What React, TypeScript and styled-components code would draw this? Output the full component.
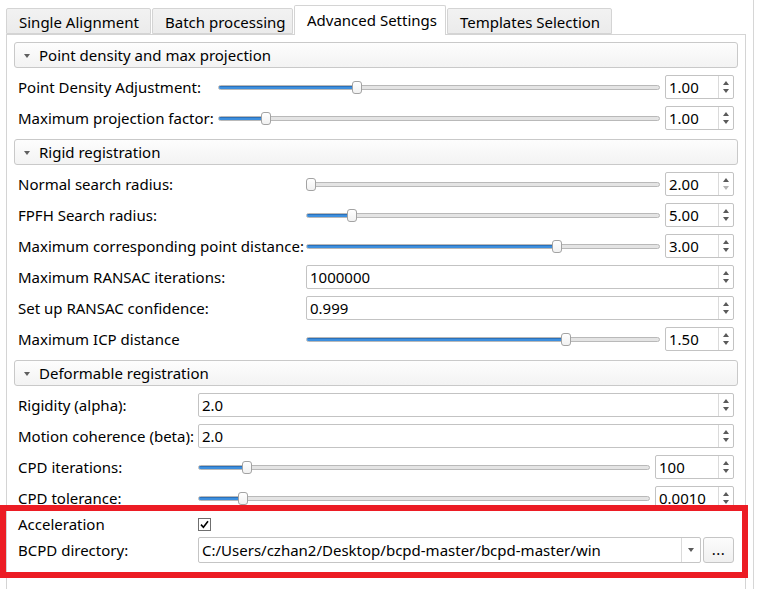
import React from "react";
import styled, { createGlobalStyle } from "styled-components";

const GlobalStyle = createGlobalStyle`
  html, body {
    margin: 0;
    padding: 0;
    background: #fff;
  }
  body {
    font-family: "Noto Sans", "Liberation Sans", sans-serif;
    font-size: 15px;
    color: #000;
  }
`;

const Window = styled.div`
  position: relative;
  width: 759px;
  height: 589px;
  overflow: hidden;
  background: #fff;
`;

const Frame = styled.div`
  width: 754px;
  height: 100%;
  border-right: 1px solid #d6d6d6;
  box-sizing: border-box;
`;

const TabBar = styled.div`
  display: flex;
  align-items: flex-end;
  height: 34px;
  padding-left: 6px;
  box-sizing: border-box;
`;

const Tab = styled.div<{ $active?: boolean; $width: number }>`
  position: relative;
  z-index: ${(p) => (p.$active ? 1 : 0)};
  box-sizing: border-box;
  width: ${(p) => p.$width}px;
  height: ${(p) => (p.$active ? 30 : 26)}px;
  margin-bottom: ${(p) => (p.$active ? -1 : 0)}px;
  margin-right: 1px;
  padding: ${(p) => (p.$active ? "0 0 2px 12px" : "1px 0 0 12px")};
  display: flex;
  align-items: center;
  border: 1px solid #d4d4d4;
  border-bottom: ${(p) => (p.$active ? "none" : "1px solid #d4d4d4")};
  border-radius: 2px 2px 0 0;
  background: ${(p) => (p.$active ? "#fff" : "linear-gradient(#f2f2f2, #ebebeb)")};
  white-space: nowrap;
`;

const Pane = styled.div`
  margin-left: 6px;
  width: 740px;
  height: 560px;
  border: 1px solid #d4d4d4;
  border-bottom: none;
  box-sizing: border-box;
  padding: 7px 7px 0;
`;

const Section = styled.div`
  margin-bottom: 6px;
`;

const SectionHeader = styled.div`
  height: 26px;
  box-sizing: border-box;
  border: 1px solid #c9c9c9;
  border-radius: 3px;
  background: linear-gradient(#fdfdfd, #f3f3f3);
  display: flex;
  align-items: center;
  gap: 9px;
  padding-left: 9px;
  margin-bottom: 3px;
`;

const Caret = styled.span`
  width: 0;
  height: 0;
  border-left: 3.5px solid transparent;
  border-right: 3.5px solid transparent;
  border-top: 4px solid #5f5f5f;
  margin-top: 1px;
`;

const Row = styled.div<{ $labelWidth: number; $height?: number }>`
  display: grid;
  grid-template-columns: ${(p) => p.$labelWidth}px 1fr;
  align-items: center;
  height: ${(p) => p.$height ?? 31}px;
  padding: 0 4px;
`;

const Label = styled.span`
  white-space: nowrap;
`;

const Control = styled.div`
  display: flex;
  align-items: center;
  gap: 5px;
  min-width: 0;
`;

const SliderTrack = styled.div`
  position: relative;
  flex: 1;
  height: 24px;
`;

const Groove = styled.div`
  position: absolute;
  left: 0;
  right: 0;
  top: 10px;
  height: 5px;
  box-sizing: border-box;
  border: 1px solid #b9b9b9;
  border-radius: 3px;
  background: #e4e4e4;
  overflow: hidden;
`;

const GrooveFill = styled.div`
  height: 100%;
  background: #3d8fde;
  box-shadow: inset 0 1px 0 #2b70b8;
`;

const Handle = styled.div`
  position: absolute;
  top: 6px;
  width: 10px;
  height: 13px;
  box-sizing: border-box;
  border: 1px solid #a3a3a3;
  border-radius: 3px;
  background: linear-gradient(#ffffff, #f1f1f1);
`;

const SpinBox = styled.div<{ $width?: number }>`
  display: flex;
  box-sizing: border-box;
  width: ${(p) => (p.$width ? `${p.$width}px` : "100%")};
  flex: ${(p) => (p.$width ? "none" : "1")};
  height: 24px;
  border: 1px solid #c3c3c3;
  border-radius: 2px;
  background: #fff;
`;

const SpinText = styled.div`
  flex: 1;
  display: flex;
  align-items: center;
  padding-left: 3px;
  white-space: nowrap;
  overflow: hidden;
`;

const SpinButtons = styled.div`
  width: 14px;
  border-left: 1px solid #dadada;
  display: flex;
  flex-direction: column;
  align-items: center;
  justify-content: center;
  gap: 4px;
`;

const Arrow = styled.span<{ $down?: boolean; $disabled?: boolean }>`
  width: 0;
  height: 0;
  border-left: 3.5px solid transparent;
  border-right: 3.5px solid transparent;
  ${(p) =>
    p.$down
      ? `border-top: 4px solid ${p.$disabled ? "#b3b3b3" : "#5a5a5a"};`
      : `border-bottom: 4px solid ${p.$disabled ? "#b3b3b3" : "#5a5a5a"};`}
`;

const CheckBox = styled.div`
  width: 13px;
  height: 13px;
  box-sizing: border-box;
  border: 1px solid #6f6f6f;
  background: #fff;
  display: flex;
  align-items: center;
  justify-content: center;
`;

const Combo = styled.div`
  flex: 1;
  display: flex;
  height: 26px;
  box-sizing: border-box;
  border: 1px solid #c5c5c5;
  border-radius: 2px;
  background: #fff;
`;

const ComboText = styled.div`
  flex: 1;
  display: flex;
  align-items: center;
  padding-left: 3px;
  white-space: nowrap;
  overflow: hidden;
`;

const ComboArrow = styled.div`
  width: 18px;
  border-left: 1px solid #dadada;
  display: flex;
  align-items: center;
  justify-content: center;
`;

const ToolButton = styled.div`
  width: 31px;
  height: 26px;
  box-sizing: border-box;
  border: 1px solid #c5c5c5;
  border-radius: 3px;
  background: linear-gradient(#fcfcfc, #f0f0f0);
  display: flex;
  align-items: center;
  justify-content: center;
  padding-bottom: 2px;
  letter-spacing: 0.5px;
`;

const Annotation = styled.div`
  position: absolute;
  left: 0;
  top: 505px;
  width: 748px;
  height: 73px;
  box-sizing: border-box;
  border: 6px solid #ec1c24;
  pointer-events: none;
`;

type Item =
  | { kind: "slider"; label: string; value: string; pct: number; atMin?: boolean }
  | { kind: "spin"; label: string; value: string }
  | { kind: "check"; label: string }
  | { kind: "combo"; label: string; value: string };

interface SectionData {
  title: string;
  labelWidth: number;
  spinWidth: number;
  items: Item[];
}

const sections: SectionData[] = [
  {
    title: "Point density and max projection",
    labelWidth: 200,
    spinWidth: 69,
    items: [
      { kind: "slider", label: "Point Density Adjustment:", value: "1.00", pct: 0.31 },
      { kind: "slider", label: "Maximum projection factor:", value: "1.00", pct: 0.1 },
    ],
  },
  {
    title: "Rigid registration",
    labelWidth: 288,
    spinWidth: 69,
    items: [
      { kind: "slider", label: "Normal search radius:", value: "2.00", pct: 0, atMin: true },
      { kind: "slider", label: "FPFH Search radius:", value: "5.00", pct: 0.12 },
      { kind: "slider", label: "Maximum corresponding point distance:", value: "3.00", pct: 0.715 },
      { kind: "spin", label: "Maximum RANSAC iterations:", value: "1000000" },
      { kind: "spin", label: "Set up RANSAC confidence:", value: "0.999" },
      { kind: "slider", label: "Maximum ICP distance", value: "1.50", pct: 0.74 },
    ],
  },
  {
    title: "Deformable registration",
    labelWidth: 180,
    spinWidth: 79,
    items: [
      { kind: "spin", label: "Rigidity (alpha):", value: "2.0" },
      { kind: "spin", label: "Motion coherence (beta):", value: "2.0" },
      { kind: "slider", label: "CPD iterations:", value: "100", pct: 0.1 },
      { kind: "slider", label: "CPD tolerance:", value: "0.0010", pct: 0.09 },
      { kind: "check", label: "Acceleration" },
      {
        kind: "combo",
        label: "BCPD directory:",
        value: "C:/Users/czhan2/Desktop/bcpd-master/bcpd-master/win",
      },
    ],
  },
];

const tabs = [
  { name: "Single Alignment", width: 145 },
  { name: "Batch processing", width: 141 },
  { name: "Advanced Settings", width: 152, active: true },
  { name: "Templates Selection", width: 165 },
];

function Spin({ value, width, downDisabled }: { value: string; width?: number; downDisabled?: boolean }) {
  return (
    <SpinBox $width={width}>
      <SpinText>{value}</SpinText>
      <SpinButtons>
        <Arrow />
        <Arrow $down $disabled={downDisabled} />
      </SpinButtons>
    </SpinBox>
  );
}

function Slider({ pct }: { pct: number }) {
  return (
    <SliderTrack>
      <Groove>
        <GrooveFill style={{ width: `calc(${pct} * (100% - 10px) + 5px)` }} />
      </Groove>
      <Handle style={{ left: `calc(${pct} * (100% - 10px))` }} />
    </SliderTrack>
  );
}

function renderItem(item: Item, s: SectionData) {
  switch (item.kind) {
    case "slider":
      return (
        <Row key={item.label} $labelWidth={s.labelWidth}>
          <Label>{item.label}</Label>
          <Control>
            <Slider pct={item.pct} />
            <Spin value={item.value} width={s.spinWidth} downDisabled={item.atMin} />
          </Control>
        </Row>
      );
    case "spin":
      return (
        <Row key={item.label} $labelWidth={s.labelWidth}>
          <Label>{item.label}</Label>
          <Control>
            <Spin value={item.value} />
          </Control>
        </Row>
      );
    case "check":
      return (
        <Row key={item.label} $labelWidth={s.labelWidth} $height={22}>
          <Label>{item.label}</Label>
          <Control>
            <CheckBox>
              <svg width="9" height="9" viewBox="0 0 9 9">
                <path d="M1 4.6 L3.4 7.2 L8 1.2" fill="none" stroke="#000" strokeWidth="1.6" />
              </svg>
            </CheckBox>
          </Control>
        </Row>
      );
    case "combo":
      return (
        <Row key={item.label} $labelWidth={s.labelWidth} $height={30}>
          <Label>{item.label}</Label>
          <Control style={{ gap: 2 }}>
            <Combo>
              <ComboText>{item.value}</ComboText>
              <ComboArrow>
                <Arrow $down />
              </ComboArrow>
            </Combo>
            <ToolButton>...</ToolButton>
          </Control>
        </Row>
      );
  }
}

export default function App() {
  return (
    <Window>
      <GlobalStyle />
      <Frame>
        <TabBar>
          {tabs.map((t) => (
            <Tab key={t.name} $width={t.width} $active={t.active}>
              {t.name}
            </Tab>
          ))}
        </TabBar>
        <Pane>
          {sections.map((s) => (
            <Section key={s.title}>
              <SectionHeader>
                <Caret />
                {s.title}
              </SectionHeader>
              {s.items.map((item) => renderItem(item, s))}
            </Section>
          ))}
        </Pane>
      </Frame>
      <Annotation />
    </Window>
  );
}
